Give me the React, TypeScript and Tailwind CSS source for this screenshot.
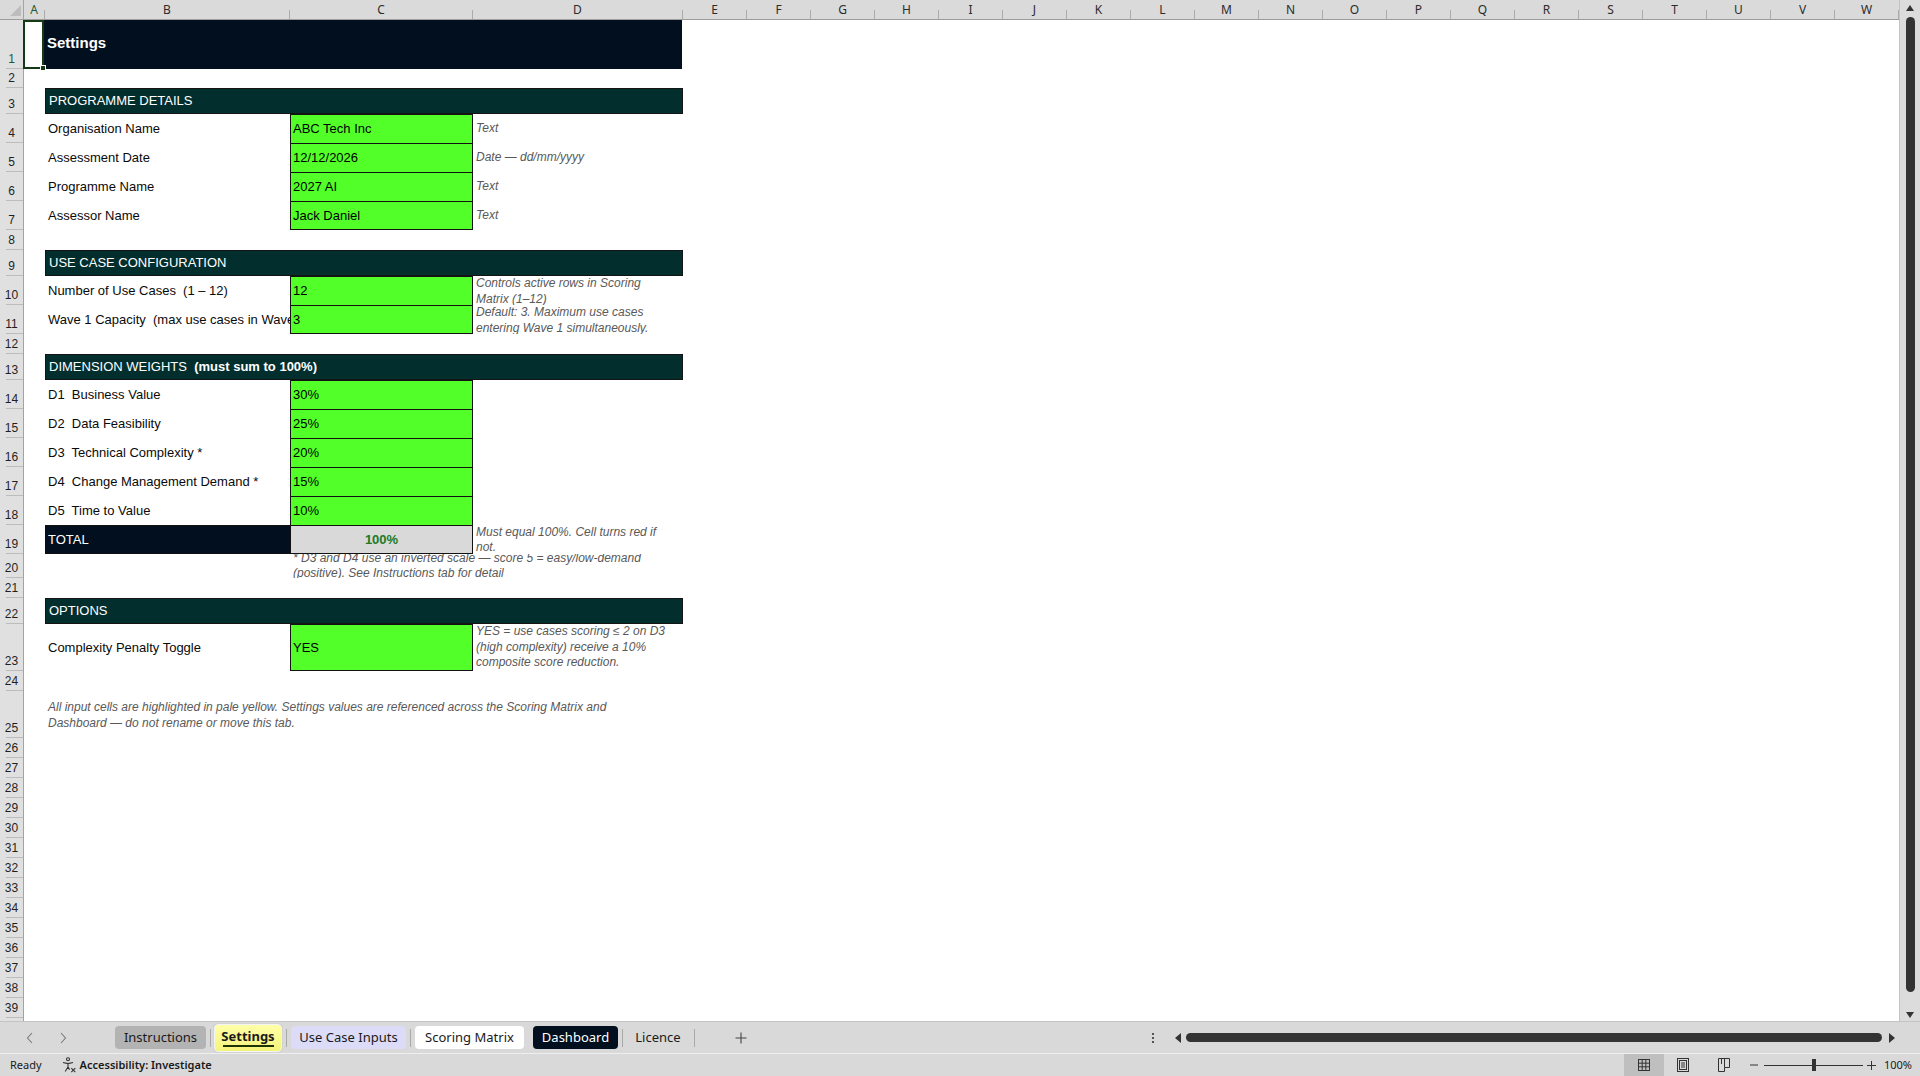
import React from "react";

const COLS = ["E","F","G","H","I","J","K","L","M","N","O","P","Q","R","S","T","U","V","W"];

function ColHead({ label, w, active }: { label: string; w: string; active?: boolean }) {
  return (
    <div className={`${w} shrink-0 flex h-full`}>
      <div className={`flex-1 flex items-center justify-center text-[12px] leading-none ${active ? "text-[#1d5a33]" : "text-[#2b2b2b]"}`}>{label}</div>
      <div className="w-px h-[9px] self-end bg-[#ababab]" />
    </div>
  );
}

function RowHeader({ n, active }: { n: number; active?: boolean }) {
  return (
    <div className="w-[24px] shrink-0 bg-[#e0e0e0] border-r border-[#a3a3a3] flex flex-col">
      <div className={`flex-1 flex items-end justify-center text-[12px] leading-[15px] pb-px ${active ? "text-[#1d5a33]" : "text-[#1f1f1f]"}`}>{n}</div>
      <div className="h-px ml-[6px] bg-[#bcbcbc]" />
    </div>
  );
}

function Row({ n, h, children, aCell, active }: { n: number; h: string; children?: React.ReactNode; aCell?: React.ReactNode; active?: boolean }) {
  return (
    <div className={`flex shrink-0 ${h}`}>
      <RowHeader n={n} active={active} />
      {aCell ?? <div className="w-[21px] shrink-0" />}
      {children}
      <div className="flex-1" />
    </div>
  );
}

function Label({ children }: { children: React.ReactNode }) {
  return (
    <div className="w-[245px] shrink-0 flex items-center overflow-hidden whitespace-pre pl-[3px] text-[13px] text-[#0a0a0a]">
      {children}
    </div>
  );
}

function Input({ children, last, big }: { children: React.ReactNode; last?: boolean; big?: boolean }) {
  return (
    <div
      className={`w-[183px] shrink-0 flex items-center overflow-hidden whitespace-nowrap pl-[2px] bg-[#52ff28] border-x border-t border-[#121212] text-[13px] text-black ${last ? "border-b" : ""} ${big ? "border-b" : ""}`}
    >
      {children}
    </div>
  );
}

function Note({ children, lead }: { children?: React.ReactNode; lead?: string }) {
  return (
    <div className="w-[210px] shrink-0 flex items-center overflow-hidden pl-[3px] pr-[11px]">
      <div className={`italic text-[12px] text-[#595959] ${lead ?? "leading-[15px]"}`}>{children}</div>
    </div>
  );
}

function Section({ children }: { children: React.ReactNode }) {
  return (
    <div className="w-[638px] shrink-0 flex items-center whitespace-pre pl-[3px] bg-[#022e2e] border border-[#141414] text-[13px] text-white">
      {children}
    </div>
  );
}

function Tab({ children, cls }: { children: React.ReactNode; cls: string }) {
  return (
    <div className={`shrink-0 flex items-center justify-center rounded-[4px] text-[13px] ${cls}`}>{children}</div>
  );
}

function Sep({ cls }: { cls: string }) {
  return <div className={`w-px h-[18px] bg-[#a9a9a9] shrink-0 ${cls}`} />;
}

export default function App() {
  const emptyRows = [26, 27, 28, 29, 30, 31, 32, 33, 34, 35, 36, 37, 38, 39, 40];
  return (
    <div className="w-[1920px] h-[1076px] flex flex-col overflow-hidden bg-white font-['Liberation_Sans',Arial,sans-serif]">
      {/* sheet + vertical scrollbar */}
      <div className="flex h-[1022px] shrink-0 border-b border-[#c4c4c4]">
        <div className="flex-1 flex flex-col overflow-hidden">
          {/* column headers */}
          <div className="flex h-[20px] shrink-0 bg-[#dadada] border-b border-[#9c9c9c] font-['Noto_Sans',sans-serif]">
            <div className="w-[24px] shrink-0 border-r border-[#a3a3a3] flex">
              <svg width="23" height="19" viewBox="0 0 23 19">
                <polygon points="21,5 21,16 10,16" fill="#bdbdbd" />
              </svg>
            </div>
            <ColHead label="A" w="w-[21px]" active />
            <ColHead label="B" w="w-[245px]" />
            <ColHead label="C" w="w-[183px]" />
            <ColHead label="D" w="w-[210px]" />
            {COLS.map((c) => (
              <ColHead key={c} label={c} w="w-[64px]" />
            ))}
            <div className="flex-1" />
          </div>

          <div className="flex flex-col font-['Liberation_Sans',Arial,sans-serif]">
            <Row
              n={1}
              h="h-[49px]"
              active
              aCell={
                <div className="w-[21px] shrink-0 relative border-2 border-[#143a16] -ml-px">
                  <div className="absolute -right-[4px] -bottom-[4px] w-[6px] h-[6px] bg-[#143a16] border border-white" />
                </div>
              }
            >
              <div className="w-[639px] shrink-0 flex items-center pl-[4px] pb-[2px] bg-[#020f1f] text-white font-bold text-[15px] -ml-px">
                Settings
              </div>
            </Row>
            <Row n={2} h="h-[19px]" />
            <Row n={3} h="h-[26px]">
              <Section>PROGRAMME DETAILS</Section>
            </Row>
            <Row n={4} h="h-[29px]">
              <Label>Organisation Name</Label>
              <Input>ABC Tech Inc</Input>
              <Note>Text</Note>
            </Row>
            <Row n={5} h="h-[29px]">
              <Label>Assessment Date</Label>
              <Input>12/12/2026</Input>
              <Note>Date — dd/mm/yyyy</Note>
            </Row>
            <Row n={6} h="h-[29px]">
              <Label>Programme Name</Label>
              <Input>2027 AI</Input>
              <Note>Text</Note>
            </Row>
            <Row n={7} h="h-[29px]">
              <Label>Assessor Name</Label>
              <Input last>Jack Daniel</Input>
              <Note>Text</Note>
            </Row>
            <Row n={8} h="h-[20px]" />
            <Row n={9} h="h-[26px]">
              <Section>USE CASE CONFIGURATION</Section>
            </Row>
            <Row n={10} h="h-[29px]">
              <Label>Number of Use Cases  (1 – 12)</Label>
              <Input>12</Input>
              <Note lead="leading-[16px]">Controls active rows in Scoring Matrix (1–12)</Note>
            </Row>
            <Row n={11} h="h-[29px]">
              <Label>Wave 1 Capacity  (max use cases in Wave 1)</Label>
              <Input last>3</Input>
              <Note lead="leading-[16px]">Default: 3. Maximum use cases entering Wave 1 simultaneously.</Note>
            </Row>
            <Row n={12} h="h-[20px]" />
            <Row n={13} h="h-[26px]">
              <Section>
                DIMENSION WEIGHTS  <span className="font-bold">(must sum to 100%)</span>
              </Section>
            </Row>
            <Row n={14} h="h-[29px]">
              <Label>D1  Business Value</Label>
              <Input>30%</Input>
            </Row>
            <Row n={15} h="h-[29px]">
              <Label>D2  Data Feasibility</Label>
              <Input>25%</Input>
            </Row>
            <Row n={16} h="h-[29px]">
              <Label>D3  Technical Complexity *</Label>
              <Input>20%</Input>
            </Row>
            <Row n={17} h="h-[29px]">
              <Label>D4  Change Management Demand *</Label>
              <Input>15%</Input>
            </Row>
            <Row n={18} h="h-[29px]">
              <Label>D5  Time to Value</Label>
              <Input>10%</Input>
            </Row>
            <Row n={19} h="h-[29px]">
              <div className="w-[245px] shrink-0 flex items-center pl-[3px] bg-[#020f1f] border-y border-[#111] text-white text-[13px]">
                TOTAL
              </div>
              <div className="w-[183px] shrink-0 flex items-center justify-center bg-[#d9d9d9] border border-[#121212] text-[13px] font-bold text-[#217a23]">
                100%
              </div>
              <Note>Must equal 100%. Cell turns red if not.</Note>
            </Row>
            <Row n={20} h="h-[24px]">
              <div className="w-[245px] shrink-0" />
              <div className="w-[393px] shrink-0 flex items-center overflow-hidden pl-[3px] pr-[4px]">
                <div className="italic text-[12px] leading-[15px] text-[#595959]">
                  * D3 and D4 use an inverted scale — score 5 = easy/low-demand (positive). See Instructions tab for detail
                </div>
              </div>
            </Row>
            <Row n={21} h="h-[20px]" />
            <Row n={22} h="h-[26px]">
              <Section>OPTIONS</Section>
            </Row>
            <Row n={23} h="h-[47px]">
              <Label>Complexity Penalty Toggle</Label>
              <Input big>YES</Input>
              <Note lead="leading-[15.5px]">YES = use cases scoring ≤ 2 on D3 (high complexity) receive a 10% composite score reduction.</Note>
            </Row>
            <Row n={24} h="h-[20px]" />
            <Row n={25} h="h-[47px]">
              <div className="w-[638px] shrink-0 flex items-center overflow-hidden pl-[3px] pr-[38px]">
                <div className="italic text-[12px] leading-[16px] text-[#595959]">
                  All input cells are highlighted in pale yellow. Settings values are referenced across the Scoring Matrix and Dashboard — do not rename or move this tab.
                </div>
              </div>
            </Row>
            {emptyRows.map((r) => (
              <Row key={r} n={r} h="h-[20px]" />
            ))}
          </div>
        </div>

        {/* vertical scrollbar */}
        <div className="w-[21px] shrink-0 bg-[#dcdcdc] border-l border-[#c4c4c4] flex flex-col items-center">
          <svg width="10" height="8" viewBox="0 0 10 8" className="mt-[4px]">
            <polygon points="5,1 9,7 1,7" fill="#333" />
          </svg>
          <div className="mt-[5px] w-[9px] h-[975px] rounded-full bg-[#333]" />
          <div className="flex-1" />
          <svg width="10" height="8" viewBox="0 0 10 8" className="mb-[2px]">
            <polygon points="1,1 9,1 5,7" fill="#333" />
          </svg>
        </div>
      </div>

      {/* sheet tabs bar */}
      <div className="h-[31px] shrink-0 flex items-center bg-[#d9d9d9] font-['Noto_Sans',sans-serif] text-[#1a1a1a]">
        <svg width="8" height="12" viewBox="0 0 8 12" className="ml-[26px] shrink-0">
          <polyline points="6,1 1.5,6 6,11" fill="none" stroke="#7a7a7a" strokeWidth="1.1" />
        </svg>
        <svg width="8" height="12" viewBox="0 0 8 12" className="ml-[25px] shrink-0">
          <polyline points="2,1 6.5,6 2,11" fill="none" stroke="#7a7a7a" strokeWidth="1.1" />
        </svg>
        <Tab cls="ml-[48px] w-[91px] h-[23px] bg-[#b3b3b3]">Instructions</Tab>
        <Sep cls="ml-[4px]" />
        <div className="ml-[3px] w-[68px] h-[28px] shrink-0 flex flex-col items-center justify-center rounded-[4px] border border-[#f4f4f4] bg-[linear-gradient(#ffffa8,#f4f47c)] shadow-[0_0_1px_#999]">
          <span className="text-[13px] font-bold leading-[16px]">Settings</span>
          <div className="w-[51px] h-[2px] bg-[#1f3300] mt-[1px]" />
        </div>
        <Sep cls="ml-[4px]" />
        <Tab cls="ml-[4px] w-[115px] h-[23px] bg-[#dcdcf8]">Use Case Inputs</Tab>
        <Sep cls="ml-[4px]" />
        <Tab cls="ml-[4px] w-[109px] h-[23px] bg-white">Scoring Matrix</Tab>
        <Tab cls="ml-[9px] w-[85px] h-[23px] bg-[#020f1f] text-white">Dashboard</Tab>
        <Sep cls="ml-[4px]" />
        <Tab cls="ml-[5px] w-[60px] h-[23px]">Licence</Tab>
        <Sep cls="ml-[6px]" />
        <svg width="12" height="12" viewBox="0 0 12 12" className="ml-[40px] shrink-0">
          <path d="M6 0.5 V11.5 M0.5 6 H11.5" stroke="#444" strokeWidth="1.1" />
        </svg>
        <div className="flex-1" />
        <svg width="4" height="12" viewBox="0 0 4 12" className="shrink-0">
          <circle cx="2" cy="2" r="1.1" fill="#333" />
          <circle cx="2" cy="6" r="1.1" fill="#333" />
          <circle cx="2" cy="10" r="1.1" fill="#333" />
        </svg>
        <svg width="6" height="10" viewBox="0 0 6 10" className="ml-[20px] shrink-0">
          <polygon points="6,0 6,10 0,5" fill="#333" />
        </svg>
        <div className="ml-[5px] w-[696px] h-[9px] rounded-full bg-[#333] shrink-0" />
        <svg width="6" height="10" viewBox="0 0 6 10" className="ml-[7px] shrink-0">
          <polygon points="0,0 0,10 6,5" fill="#333" />
        </svg>
        <div className="w-[25px] shrink-0" />
      </div>

      {/* status bar */}
      <div className="flex-1 flex items-center bg-[#d9d9d9] border-t border-[#efefef] font-['Noto_Sans',sans-serif] text-[11px] text-[#1a1a1a]">
        <span className="ml-[10px]">Ready</span>
        <svg width="16" height="16" viewBox="0 0 16 16" className="ml-[19px] shrink-0" fill="none" stroke="#333" strokeWidth="1.1">
          <circle cx="7" cy="2.3" r="1.5" />
          <path d="M2 5.5 L7 6.6 L12 5.5 M7 6.6 V10 M7 10 L4.2 14.5 M7 10 L8.6 12.6" />
          <path d="M10.3 11.2 L14.3 15.2 M14.3 11.2 L10.3 15.2" />
        </svg>
        <span className="ml-[3px] font-semibold">Accessibility: Investigate</span>
        <div className="flex-1" />
        <div className="w-[40px] h-full bg-[#bfbfbf] flex items-center justify-center shrink-0">
          <svg width="14" height="14" viewBox="0 0 14 14" fill="none" stroke="#333" strokeWidth="1">
            <rect x="1.5" y="1.5" width="11" height="11" />
            <path d="M5.2 1.5 V12.5 M8.8 1.5 V12.5 M1.5 5.2 H12.5 M1.5 8.8 H12.5" />
          </svg>
        </div>
        <svg width="12" height="14" viewBox="0 0 12 14" className="ml-[13px] shrink-0" fill="none" stroke="#333" strokeWidth="1">
          <rect x="0.5" y="0.5" width="11" height="13" />
          <rect x="2.5" y="2.5" width="7" height="9" />
          <path d="M4 5 H8 M4 7 H8 M4 9 H8" />
        </svg>
        <svg width="12" height="14" viewBox="0 0 12 14" className="ml-[29px] shrink-0" fill="none" stroke="#333" strokeWidth="1">
          <path d="M0.5 0.5 H11.5 V9.5 H6.5 V13.5 H0.5 Z M6.5 0.5 V9.5 M3.5 0.5 V6" />
        </svg>
        <svg width="8" height="2" viewBox="0 0 8 2" className="ml-[20px] shrink-0">
          <path d="M0 1 H8" stroke="#333" strokeWidth="1" />
        </svg>
        <div className="ml-[6px] w-[99px] h-[12px] flex items-center shrink-0">
          <div className="w-[48px] h-px bg-[#333]" />
          <div className="w-[4px] h-[12px] bg-[#333]" />
          <div className="w-[47px] h-px bg-[#333]" />
        </div>
        <svg width="9" height="9" viewBox="0 0 9 9" className="ml-[4px] shrink-0">
          <path d="M4.5 0 V9 M0 4.5 H9" stroke="#333" strokeWidth="1" />
        </svg>
        <span className="ml-[8px] mr-[8px]">100%</span>
      </div>
    </div>
  );
}
